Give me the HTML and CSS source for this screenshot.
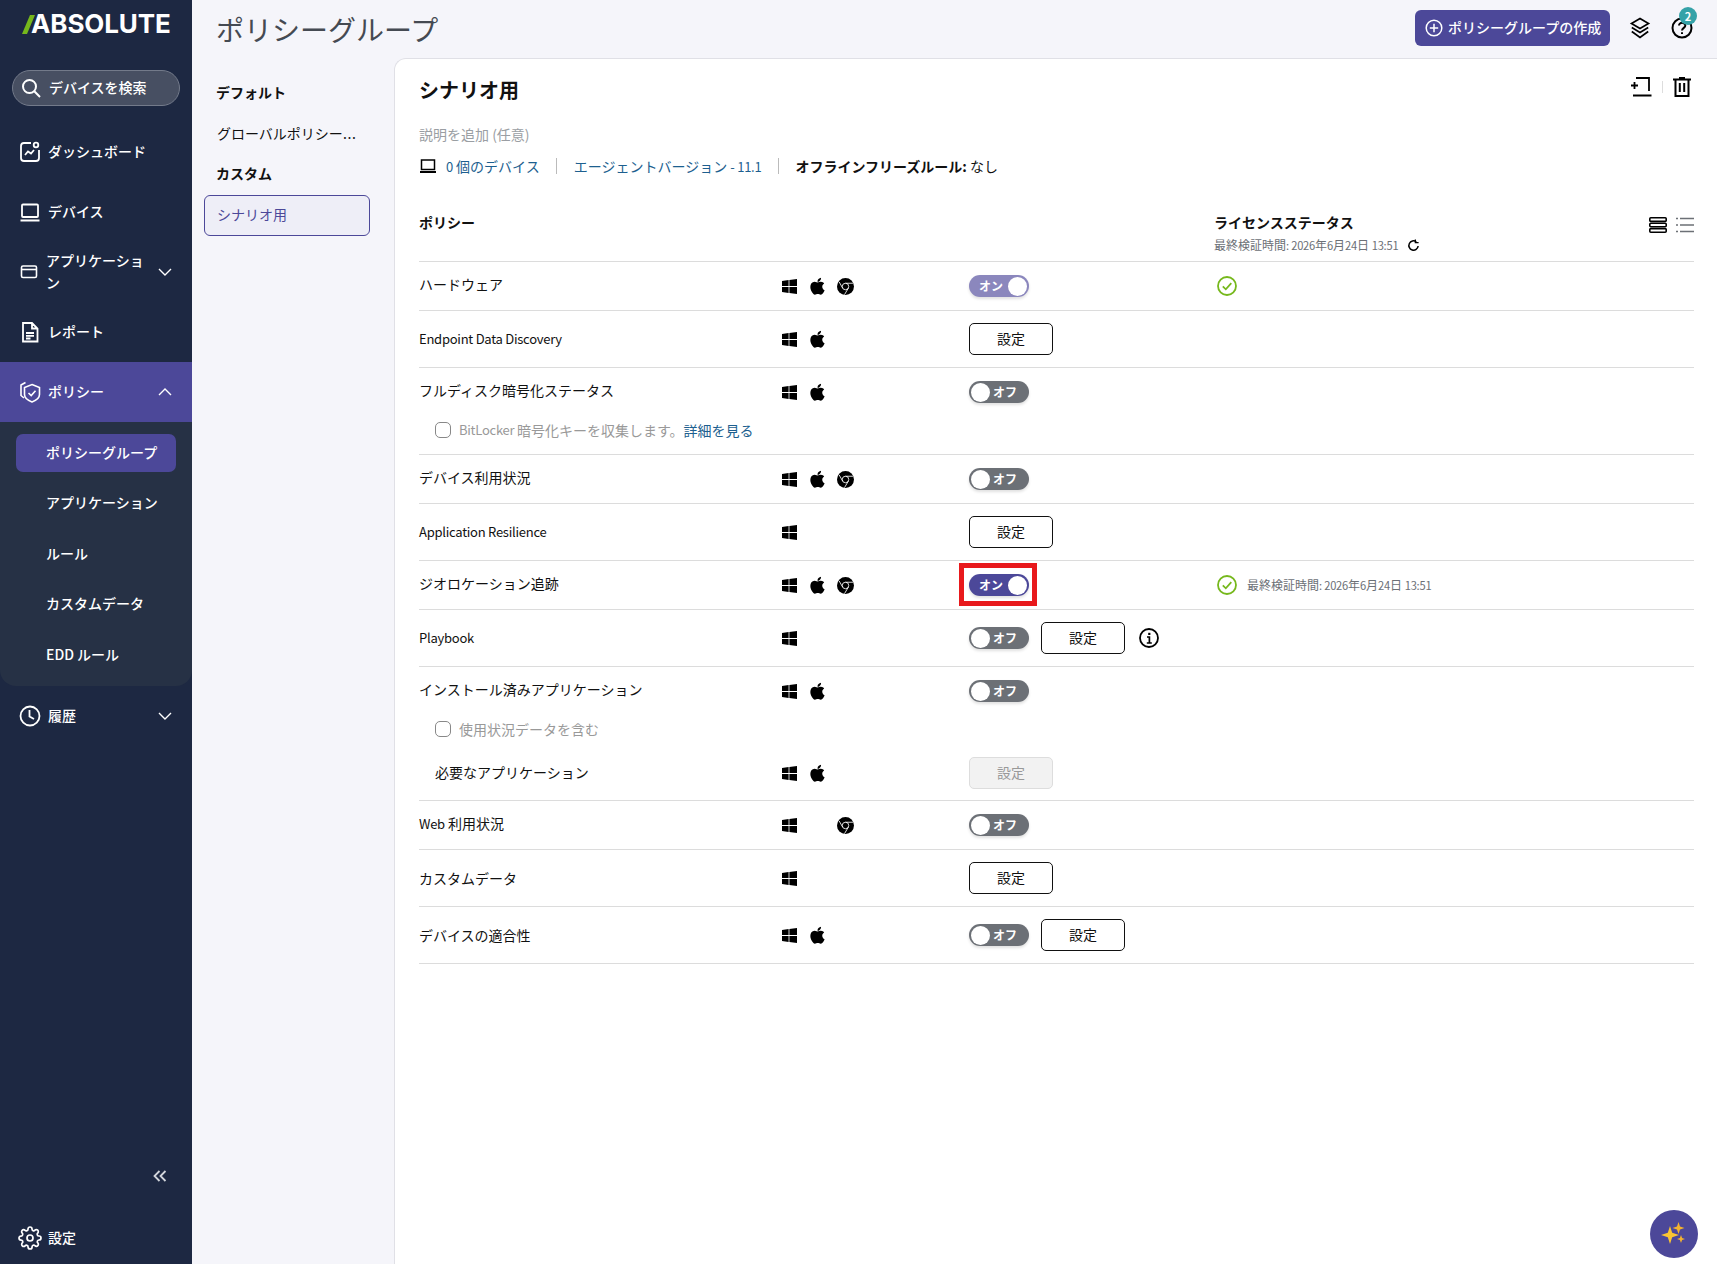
FILE: index.html
```html
<!DOCTYPE html>
<html lang="ja">
<head>
    <meta charset="UTF-8">
    <title>ポリシーグループ</title>
    <link rel="stylesheet" href="styles.css">
</head>
<body>
    <!-- Shared icons -->
    <svg class="sprite" xmlns="http://www.w3.org/2000/svg">
        <symbol id="i-win" viewBox="0 0 15 15"><path d="M0 2.1 6.6 1.1V7H0zM7.4 1 15 0V7H7.4zM0 8H6.6V13.9L0 12.9zM7.4 8H15V15L7.4 14z"/></symbol>
        <symbol id="i-apple" viewBox="3 2.5 17 18.5"><path d="M17.05 20.28c-.98.95-2.05.8-3.08.35-1.09-.46-2.09-.48-3.24 0-1.44.62-2.2.44-3.06-.35C2.79 15.25 3.51 7.59 9.05 7.31c1.35.07 2.29.74 3.08.8 1.18-.24 2.31-.93 3.57-.84 1.51.12 2.65.72 3.4 1.8-3.12 1.87-2.38 5.98.48 7.13-.57 1.5-1.31 2.99-2.54 4.09zM12.03 7.25c-.15-2.23 1.66-4.07 3.74-4.25.29 2.58-2.34 4.5-3.74 4.25z"/></symbol>
        <symbol id="i-chrome" viewBox="0 0 24 24"><circle cx="12" cy="12" r="12"/><circle cx="12" cy="12" r="4.6" fill="none" stroke="#fff" stroke-width="1.2"/><path d="M12 7.4H22.5M8 14.3 3 5.5M16 14.3 10.6 23.5" fill="none" stroke="#fff" stroke-width="1.2"/></symbol>
        <symbol id="i-check" viewBox="0 0 20 20"><circle cx="10" cy="10" r="9" fill="none" stroke="#76b81c" stroke-width="1.8"/><path d="M5.8 10.4 8.8 13.3 14.3 7.2" fill="none" stroke="#76b81c" stroke-width="1.8"/></symbol>
        <symbol id="i-down" viewBox="0 0 16 16"><path d="M2 5 8 11 14 5" fill="none" stroke="#fff" stroke-width="1.4"/></symbol>
        <symbol id="i-up" viewBox="0 0 16 16"><path d="M2 11 8 5 14 11" fill="none" stroke="#fff" stroke-width="1.4"/></symbol>
    </svg>

    <!-- Sidebar -->
    <aside class="sidebar">
        <div class="logo">
            <svg class="logo-slash" viewBox="0 0 13 19"><path d="M8 0H13L5 19H0z"/></svg>
            <span>ABSOLUTE</span>
        </div>
        <div class="search-pill">
            <svg viewBox="0 0 20 20" width="20" height="20" fill="none" stroke="#fff" stroke-width="2"><circle cx="8.500" cy="8.500" r="6.500"/><path d="M13.300 13.300 19 19"/></svg>
            <span>デバイスを検索</span>
        </div>
        <nav class="nav">
            <a class="nav-item" href="#">
                <svg class="nav-icon" viewBox="0 0 24 24" fill="none" stroke="#fff" stroke-width="1.800"><path d="M13 3H6A3 3 0 0 0 3 6V18A3 3 0 0 0 6 21H18A3 3 0 0 0 21 18V10"/><circle cx="18" cy="5" r="2.300"/><path d="M7 15 10 11.500 13 13.500 16 10"/></svg>
                <span>ダッシュボード</span>
            </a>
            <a class="nav-item" href="#">
                <svg class="nav-icon" viewBox="0 0 24 24" fill="none" stroke="#fff" stroke-width="1.800"><rect x="4" y="4.500" width="16" height="12.500" rx="1"/><path d="M2.500 20.500H21.500" stroke-width="2"/></svg>
                <span>デバイス</span>
            </a>
            <a class="nav-item nav-item-apps" href="#">
                <svg class="nav-icon" viewBox="0 0 24 24" fill="none" stroke="#fff" stroke-width="1.600"><rect x="3.500" y="6" width="15" height="11.500" rx="1.500"/><path d="M3.500 9.500H18.500"/></svg>
                <span class="nav-wrap">アプリケーション</span>
                <svg class="chevron"><use href="#i-down"/></svg>
            </a>
            <a class="nav-item" href="#">
                <svg class="nav-icon" viewBox="0 0 24 24" fill="none" stroke="#fff" stroke-width="1.800"><path d="M5 3H14L19.500 8.500V21.500H5zM14 3V8.500H19.500M8 13H16M8 15.800H16M8 18.500H12.500"/></svg>
                <span>レポート</span>
            </a>
            <a class="nav-item active" href="#">
                <svg class="nav-icon" viewBox="0 0 24 24" fill="none" stroke="#fff" stroke-width="1.600"><path d="M7.500 2.500 3 5V15.500L6 18"/><path d="M14 4.500 21.500 7.500V14.500C21.500 18 18 20.500 14 22 10 20.500 6.500 18 6.500 14.500V7.500z"/><path d="M10.500 13 13.200 15.500 17.500 10.800"/></svg>
                <span>ポリシー</span>
                <svg class="chevron"><use href="#i-up"/></svg>
            </a>
            <div class="subnav">
                <a class="sub-item current" href="#">ポリシーグループ</a>
                <a class="sub-item" href="#">アプリケーション</a>
                <a class="sub-item" href="#">ルール</a>
                <a class="sub-item" href="#">カスタムデータ</a>
                <a class="sub-item" href="#">EDD ルール</a>
            </div>
            <a class="nav-item" href="#">
                <svg class="nav-icon" viewBox="0 0 24 24" fill="none" stroke="#fff" stroke-width="1.800"><circle cx="12" cy="12" r="9.500"/><path d="M11.500 6V12.500L16 15"/></svg>
                <span>履歴</span>
                <svg class="chevron"><use href="#i-down"/></svg>
            </a>
        </nav>
        <div class="collapse">
            <svg viewBox="0 0 14 12" width="14" height="12" fill="none" stroke="#d3d6dc" stroke-width="1.800"><path d="M6.500 1 1.500 6 6.500 11M12.500 1 7.500 6 12.500 11"/></svg>
        </div>
        <a class="nav-item nav-settings" href="#">
            <svg class="nav-icon" viewBox="0 0 24 24" fill="none" stroke="#fff" stroke-width="1.700"><circle cx="12" cy="12" r="3"/><path d="M19.400 15a1.650 1.650 0 0 0 .33 1.820l.06.06a2 2 0 0 1 0 2.830 2 2 0 0 1-2.830 0l-.06-.06a1.650 1.650 0 0 0-1.820-.33 1.650 1.650 0 0 0-1 1.510V21a2 2 0 0 1-2 2 2 2 0 0 1-2-2v-.09A1.650 1.650 0 0 0 9 19.400a1.650 1.650 0 0 0-1.820.33l-.06.06a2 2 0 0 1-2.830 0 2 2 0 0 1 0-2.830l.06-.06a1.650 1.650 0 0 0 .33-1.820 1.650 1.650 0 0 0-1.510-1H3a2 2 0 0 1-2-2 2 2 0 0 1 2-2h.09A1.650 1.650 0 0 0 4.600 9a1.650 1.650 0 0 0-.33-1.820l-.06-.06a2 2 0 0 1 0-2.830 2 2 0 0 1 2.830 0l.06.06a1.650 1.650 0 0 0 1.820.33H9a1.650 1.650 0 0 0 1-1.510V3a2 2 0 0 1 2-2 2 2 0 0 1 2 2v.09a1.650 1.650 0 0 0 1 1.510 1.650 1.650 0 0 0 1.820-.33l.06-.06a2 2 0 0 1 2.830 0 2 2 0 0 1 0 2.830l-.06.06a1.650 1.650 0 0 0-.33 1.820V9a1.650 1.650 0 0 0 1.510 1H21a2 2 0 0 1 2 2 2 2 0 0 1-2 2h-.09a1.650 1.650 0 0 0-1.510 1z"/></svg>
            <span>設定</span>
        </a>
    </aside>

    <div class="main">
        <!-- Top bar -->
        <header class="topbar">
            <h1>ポリシーグループ</h1>
            <button class="create-btn">
                <svg viewBox="0 0 18 18" width="18" height="18" fill="none" stroke="#fff" stroke-width="1.500"><circle cx="9" cy="9" r="7.800"/><path d="M9 4.800V13.200M4.800 9H13.200"/></svg>
                ポリシーグループの作成
            </button>
            <svg class="top-icon" viewBox="0 0 22 22" fill="none" stroke="#000" stroke-width="1.700"><path d="M11 1.500 19.500 6.500 11 11.500 2.500 6.500zM2.800 10.500 11 15.500 19.200 10.500M2.800 14.500 11 20.500 19.200 14.500"/></svg>
            <div class="help">
                <svg class="top-icon" viewBox="0 0 22 22" fill="none" stroke="#000" stroke-width="2"><circle cx="11" cy="11" r="9.500"/><path d="M8 8.500C8 4.800 14.500 5 14.300 8.800 14.200 10.800 11 11 11 13.500"/><path d="M11 15.300V17"/></svg>
                <span class="badge">2</span>
            </div>
        </header>

        <div class="content">
            <!-- Group list -->
            <div class="groups">
                <div class="group-label">デフォルト</div>
                <div class="group-link">グローバルポリシー<span class="dots">...</span></div>
                <div class="group-label">カスタム</div>
                <div class="group-selected">シナリオ用</div>
            </div>

            <!-- Panel -->
            <section class="panel">
                <div class="panel-actions">
                    <svg viewBox="0 0 22 20" width="22" height="20" fill="none" stroke="#000" stroke-width="1.800"><path d="M6 1H19V14M3 18.500H21.500M1 8.500H8M4.500 5V12"/></svg>
                    <span class="action-sep"></span>
                    <svg viewBox="0 0 18 20" width="18" height="20" fill="none" stroke="#000" stroke-width="2"><path d="M0 2.500H18M6 1H12M2.500 2.500V19H15.500V2.500M6.800 6V15M11.200 6V15"/></svg>
                </div>
                <h2>シナリオ用</h2>
                <p class="desc">説明を追加 (任意)</p>
                <div class="meta">
                    <svg viewBox="0 0 18 16" width="18" height="16" fill="none" stroke="#000" stroke-width="1.500"><rect x="2.500" y="2" width="13" height="9.500"/><path d="M1 14H17" stroke-width="2"/></svg>
                    <a href="#" class="meta-devices"><span class="lat">0</span> 個のデバイス</a>
                    <span class="meta-sep"></span>
                    <a href="#">エージェントバージョン <span class="lat">- 11.1</span></a>
                    <span class="meta-sep"></span>
                    <span><b>オフラインフリーズルール:</b> なし</span>
                </div>

                <div class="table-head">
                    <div class="head-policy">ポリシー</div>
                    <div class="head-license">
                        <div>
                            <div class="head-title">ライセンスステータス</div>
                            <div class="head-sub"><span>最終検証時間<span class="lat">: 2026</span>年<span class="lat">6</span>月<span class="lat">24</span>日 <span class="lat">13:51</span></span>
                                <svg viewBox="0 0 14 14" width="13" height="13" fill="none" stroke="#000" stroke-width="1.600"><path d="M12 7.500A5 5 0 1 1 10 3"/><path d="M9 .5V4H12.500" stroke-width="1.400"/></svg>
                            </div>
                        </div>
                        <div class="view-icons">
                            <svg viewBox="0 0 18 16" width="18" height="16" fill="none" stroke="#000" stroke-width="1.600"><rect x=".8" y=".8" width="16.400" height="3.600" rx="1"/><rect x=".8" y="6.200" width="16.400" height="3.600" rx="1"/><rect x=".8" y="11.600" width="16.400" height="3.600" rx="1"/></svg>
                            <svg viewBox="0 0 18 16" width="18" height="16" fill="none" stroke="#6c7076" stroke-width="1.300"><path d="M4 1.500H18M4 8H18M4 14.500H18M0 1.500H2M0 8H2M0 14.500H2"/></svg>
                        </div>
                    </div>
                </div>

                <div class="row">
                    <div>ハードウェア</div>
                    <div class="os"><svg class="os-win"><use href="#i-win"/></svg><svg class="os-apple"><use href="#i-apple"/></svg><svg class="os-chrome"><use href="#i-chrome"/></svg></div>
                    <div class="ctrl"><span class="toggle on dim"><em>オン</em><i></i></span></div>
                    <div class="status"><svg class="ok"><use href="#i-check"/></svg></div>
                </div>
                <div class="row row-btn">
                    <div class="lat">Endpoint Data Discovery</div>
                    <div class="os"><svg class="os-win"><use href="#i-win"/></svg><svg class="os-apple"><use href="#i-apple"/></svg></div>
                    <div class="ctrl"><button class="btn">設定</button></div>
                </div>
                <div class="row row-tall">
                    <div>フルディスク暗号化ステータス</div>
                    <div class="os"><svg class="os-win"><use href="#i-win"/></svg><svg class="os-apple"><use href="#i-apple"/></svg></div>
                    <div class="ctrl"><span class="toggle"><i></i><em>オフ</em></span></div>
                    <label class="sub-check"><span class="box"></span><span class="lat">BitLocker&nbsp;</span>暗号化キーを収集します。<a href="#">詳細を見る</a></label>
                </div>
                <div class="row">
                    <div>デバイス利用状況</div>
                    <div class="os"><svg class="os-win"><use href="#i-win"/></svg><svg class="os-apple"><use href="#i-apple"/></svg><svg class="os-chrome"><use href="#i-chrome"/></svg></div>
                    <div class="ctrl"><span class="toggle"><i></i><em>オフ</em></span></div>
                </div>
                <div class="row row-btn">
                    <div class="lat">Application Resilience</div>
                    <div class="os"><svg class="os-win"><use href="#i-win"/></svg></div>
                    <div class="ctrl"><button class="btn">設定</button></div>
                </div>
                <div class="row">
                    <div>ジオロケーション追跡</div>
                    <div class="os"><svg class="os-win"><use href="#i-win"/></svg><svg class="os-apple"><use href="#i-apple"/></svg><svg class="os-chrome"><use href="#i-chrome"/></svg></div>
                    <div class="ctrl"><span class="toggle on"><em>オン</em><i></i><span class="marker"></span></span></div>
                    <div class="status"><svg class="ok"><use href="#i-check"/></svg><span class="checked">最終検証時間<span class="lat">: 2026</span>年<span class="lat">6</span>月<span class="lat">24</span>日 <span class="lat">13:51</span></span></div>
                </div>
                <div class="row row-btn">
                    <div class="lat">Playbook</div>
                    <div class="os"><svg class="os-win"><use href="#i-win"/></svg></div>
                    <div class="ctrl">
                        <span class="toggle"><i></i><em>オフ</em></span>
                        <button class="btn">設定</button>
                        <svg class="info" viewBox="0 0 20 20" fill="none" stroke="#000" stroke-width="1.800"><circle cx="10" cy="10" r="9"/><path d="M8 9H10.400V14.800M7.800 15H12.800" stroke-width="1.700"/><path d="M10.300 4.800V7" stroke-width="2.200"/></svg>
                    </div>
                </div>
                <div class="row row-apps">
                    <div>インストール済みアプリケーション</div>
                    <div class="os"><svg class="os-win"><use href="#i-win"/></svg><svg class="os-apple"><use href="#i-apple"/></svg></div>
                    <div class="ctrl"><span class="toggle"><i></i><em>オフ</em></span></div>
                    <label class="sub-check"><span class="box"></span>使用状況データを含む</label>
                    <div class="sub-name">必要なアプリケーション</div>
                    <div class="os sub-line"><svg class="os-win"><use href="#i-win"/></svg><svg class="os-apple"><use href="#i-apple"/></svg></div>
                    <div class="ctrl sub-line"><button class="btn btn-off">設定</button></div>
                </div>
                <div class="row">
                    <div><span class="lat">Web</span> 利用状況</div>
                    <div class="os"><svg class="os-win"><use href="#i-win"/></svg><svg class="os-apple os-hidden"></svg><svg class="os-chrome"><use href="#i-chrome"/></svg></div>
                    <div class="ctrl"><span class="toggle"><i></i><em>オフ</em></span></div>
                </div>
                <div class="row row-btn">
                    <div>カスタムデータ</div>
                    <div class="os"><svg class="os-win"><use href="#i-win"/></svg></div>
                    <div class="ctrl"><button class="btn">設定</button></div>
                </div>
                <div class="row row-btn">
                    <div>デバイスの適合性</div>
                    <div class="os"><svg class="os-win"><use href="#i-win"/></svg><svg class="os-apple"><use href="#i-apple"/></svg></div>
                    <div class="ctrl">
                        <span class="toggle"><i></i><em>オフ</em></span>
                        <button class="btn">設定</button>
                    </div>
                </div>

                <button class="fab">
                    <svg viewBox="0 0 48 48" width="48" height="48" fill="#f5b32e"><path d="M20 16 22.200 22.800 29 25 22.200 27.200 20 34 17.800 27.200 11 25 17.800 22.800z" fill="#fbc531"/><path d="M28.500 12 30 16.500 34.500 18 30 19.500 28.500 24 27 19.500 22.500 18 27 16.500z"/><path d="M31 25 32.100 28 35 29 32.100 30 31 33 29.900 30 27 29 29.900 28z"/></svg>
                </button>
            </section>
        </div>
    </div>
</body>
</html>
```

FILE: styles.css
```css
/* General Styles */
* {
    box-sizing: border-box;
}

body {
    margin: 0;
    height: 100vh;
    display: flex;
    overflow: hidden;
    font-family: "Noto Sans CJK JP", "Noto Sans", sans-serif;
    font-size: 14px;
    color: #111;
    background-color: #f5f5fa;
}

a {
    text-decoration: none;
    color: inherit;
}

.sprite {
    display: none;
}

/* latin runs in the reference are narrower than the CJK font's own */
.lat {
    font-size: 0.93em;
    letter-spacing: -0.02em;
}

/* Sidebar */
.sidebar {
    width: 192px;
    flex-shrink: 0;
    display: flex;
    flex-direction: column;
    background-color: #1d2842;
    color: #fff;
}

.logo {
    height: 70px;
    padding: 9px 0 0 22px;
    display: flex;
    align-items: flex-start;
}

.logo-slash {
    width: 13px;
    height: 19px;
    margin: 6px -4px 0 0;
    fill: #76b81c;
}

.logo span {
    font-family: Inter, sans-serif;
    font-size: 26px;
    font-weight: 700;
    line-height: 30px;
    letter-spacing: -0.1px;
}

.search-pill {
    height: 36px;
    margin: 0 12px 16px;
    padding: 0 12px 2px 8px;
    display: flex;
    align-items: center;
    gap: 8px;
    border: 1px solid #737a8a;
    border-radius: 18px;
    background-color: #474f62;
    font-weight: 500;
}

.search-pill svg {
    margin-top: 2px;
}

.nav {
    display: flex;
    flex-direction: column;
}

.nav-item {
    height: 60px;
    padding: 0 19px 0 18px;
    display: flex;
    align-items: center;
    gap: 6px;
    font-weight: 500;
}

.nav-item span {
    margin-bottom: 2px;
}

.nav-item.active {
    background-color: #4c4899;
}

.nav-icon {
    width: 24px;
    height: 24px;
    flex-shrink: 0;
}

.nav-wrap {
    width: 100px;
    line-height: 22px;
    margin-left: -2px;
}

.chevron {
    width: 16px;
    height: 16px;
    margin-left: auto;
}

.subnav {
    padding: 12px 16px 0;
    height: 264px;
    display: flex;
    flex-direction: column;
    gap: 12.5px;
    background-color: #263145;
    border-radius: 0 0 16px 16px;
}

.sub-item {
    height: 38px;
    padding: 0 0 3px 30px;
    display: flex;
    align-items: center;
    border-radius: 7px;
    font-weight: 500;
}

.sub-item.current {
    background-color: #4c4899;
}

.collapse {
    margin-top: auto;
    padding: 0 25px 0 0;
    display: flex;
    justify-content: flex-end;
}

.nav-settings {
    margin: 26px 0 -4px;
    flex-shrink: 0;
}

/* Main */
.main {
    flex: 1;
    display: flex;
    flex-direction: column;
    min-width: 0;
}

.topbar {
    height: 58px;
    flex-shrink: 0;
    padding: 0 27px 2px 24px;
    display: flex;
    align-items: center;
}

.topbar h1 {
    margin: 2px auto 0 0;
    font-size: 28px;
    font-weight: 400;
    color: #454a52;
}

.create-btn {
    height: 36px;
    width: 195px;
    margin-right: 19px;
    padding: 0 0 2px 10px;
    display: flex;
    align-items: center;
    gap: 5px;
    border: none;
    border-radius: 6px;
    background-color: #4c4899;
    color: #fff;
    font: 500 14px "Noto Sans CJK JP", sans-serif;
}

.create-btn svg {
    margin-top: 2px;
}

.top-icon {
    width: 22px;
    height: 22px;
}

.help {
    position: relative;
    height: 22px;
    margin-left: 20px;
    margin-right: -3px;
}

.badge {
    position: absolute;
    top: -10px;
    right: -4px;
    width: 18px;
    height: 18px;
    border-radius: 50%;
    background-color: #35a2a8;
    color: #fff;
    font-size: 11px;
    font-weight: 700;
    line-height: 18px;
    text-align: center;
}

.content {
    flex: 1;
    display: flex;
    min-height: 0;
}

/* Group list */
.groups {
    width: 202px;
    flex-shrink: 0;
    padding: 24px 24px 0 12px;
}

.group-label,
.group-link {
    height: 20px;
    margin: 0 0 20.5px 12px;
    line-height: 20px;
    white-space: nowrap;
}

.group-label {
    font-weight: 700;
}

.group-link {
    margin-left: 13px;
}

.dots {
    letter-spacing: 0.7px;
}

.group-selected {
    height: 41px;
    margin-top: -8.5px;
    padding: 0 0 3px 12px;
    display: flex;
    align-items: center;
    border: 1px solid #4c4899;
    border-radius: 6px;
    background-color: #eeeef7;
    color: #4c4899;
}

/* Panel */
.panel {
    flex: 1;
    position: relative;
    padding: 18px 23px 0 24px;
    background-color: #fff;
    border-top: 1px solid #e0e0e6;
    border-left: 1px solid #e0e0e6;
    border-top-left-radius: 12px;
}

.panel-actions {
    position: absolute;
    top: 18px;
    right: 26px;
    display: flex;
    align-items: center;
    gap: 10px;
}

.action-sep {
    width: 1px;
    height: 12px;
    background-color: #ddd;
}

.panel h2 {
    margin: 0;
    font-size: 20px;
    font-weight: 700;
    line-height: 26px;
}

.desc {
    margin: 21px 0 0;
    line-height: 20px;
    color: #9a9ea3;
}

.meta {
    margin-top: 12px;
    height: 20px;
    display: flex;
    align-items: center;
    font-size: 14px;
}

.meta a {
    color: #1d5f8f;
}

.meta-devices {
    margin-left: 9px;
}

.meta-sep {
    width: 1px;
    height: 16px;
    margin: 0 16.5px;
    background-color: #bbb;
}

.table-head {
    margin-top: 36px;
    height: 49px;
    display: grid;
    grid-template-columns: 795px 1fr;
}

.head-policy,
.head-title {
    font-weight: 700;
    line-height: 20px;
}

.head-license {
    display: flex;
    justify-content: space-between;
    align-items: flex-start;
}

.head-sub {
    margin: 4px 0 0;
    display: flex;
    align-items: center;
    gap: 9px;
    font-size: 12px;
    line-height: 18px;
    color: #6c7076;
}

.view-icons {
    display: flex;
    gap: 9px;
    padding: 5px 0 0;
}

/* Policy rows */
.row {
    display: grid;
    grid-template-columns: 363px 187px 245px 1fr;
    align-items: center;
    padding: 13px 0;
    line-height: 22px;
    border-top: 1px solid #dcdcdc;
}

.row:last-of-type {
    border-bottom: 1px solid #dcdcdc;
}

/* labels sit a little above the toggle's centre */
.row:not(.row-btn) > div:first-child {
    margin-top: -4px;
}

.row-btn {
    padding: 12px 0;
}

.row-tall {
    padding-bottom: 14px;
}

.row-apps {
    padding-bottom: 11px;
}

.os {
    display: flex;
    align-items: center;
    gap: 12px;
    height: 22px;
}

.os svg {
    fill: #000;
}

.os-win {
    width: 15px;
    height: 15px;
}

.os-apple {
    width: 16px;
    height: 18px;
}

.os-chrome {
    width: 17px;
    height: 17px;
}

.ctrl {
    display: flex;
    align-items: center;
    gap: 12px;
}

.toggle {
    position: relative;
    width: 60px;
    height: 22px;
    padding: 0 2px;
    display: flex;
    align-items: center;
    justify-content: space-between;
    border-radius: 11px;
    background-color: #6c7076;
    box-shadow: 0 2px 3px rgba(0, 0, 0, 0.12);
}

.toggle.on {
    background-color: #4c4899;
    padding-left: 10px;
}

.toggle.dim {
    background-color: #8b87bd;
}

.toggle em {
    font-style: normal;
    font-size: 12px;
    font-weight: 700;
    color: #fff;
}

.toggle:not(.on) em {
    margin-right: 10px;
}

.toggle i {
    width: 19px;
    height: 19px;
    border-radius: 50%;
    background-color: #fff;
}

.marker {
    position: absolute;
    top: -11px;
    left: -10px;
    width: 78px;
    height: 43px;
    border: 5px solid #e8191c;
}

.btn {
    width: 84px;
    height: 32px;
    padding: 0 0 2px;
    border: 1px solid #111;
    border-radius: 5px;
    background-color: #fff;
    color: #111;
    font: 400 14px "Noto Sans CJK JP", sans-serif;
}

.btn-off {
    border-color: #ddd;
    background-color: #f2f2f2;
    color: #999;
}

.info {
    width: 20px;
    height: 20px;
    margin-left: 2px;
}

.status {
    display: flex;
    align-items: center;
    padding-left: 3px;
}

.ok {
    width: 20px;
    height: 20px;
}

.checked {
    margin-left: 10px;
    font-size: 12px;
    color: #6c7076;
}

.sub-check {
    grid-column: 1 / -1;
    margin: 17px 0 0 16px;
    height: 20px;
    display: flex;
    align-items: center;
    color: #999;
}

.sub-check a {
    color: #1d5f8f;
}

.box {
    width: 16px;
    height: 16px;
    margin-right: 8px;
    border: 1px solid #888;
    border-radius: 5px;
}

.sub-name {
    margin: 16px 0 0 16px;
}

.sub-line {
    margin-top: 18px;
}

.os-hidden {
    visibility: hidden;
}

/* Assistant button */
.fab {
    position: absolute;
    right: 19px;
    bottom: 6px;
    width: 48px;
    height: 48px;
    padding: 0;
    border: none;
    border-radius: 50%;
    background-color: #4c4899;
}
```
